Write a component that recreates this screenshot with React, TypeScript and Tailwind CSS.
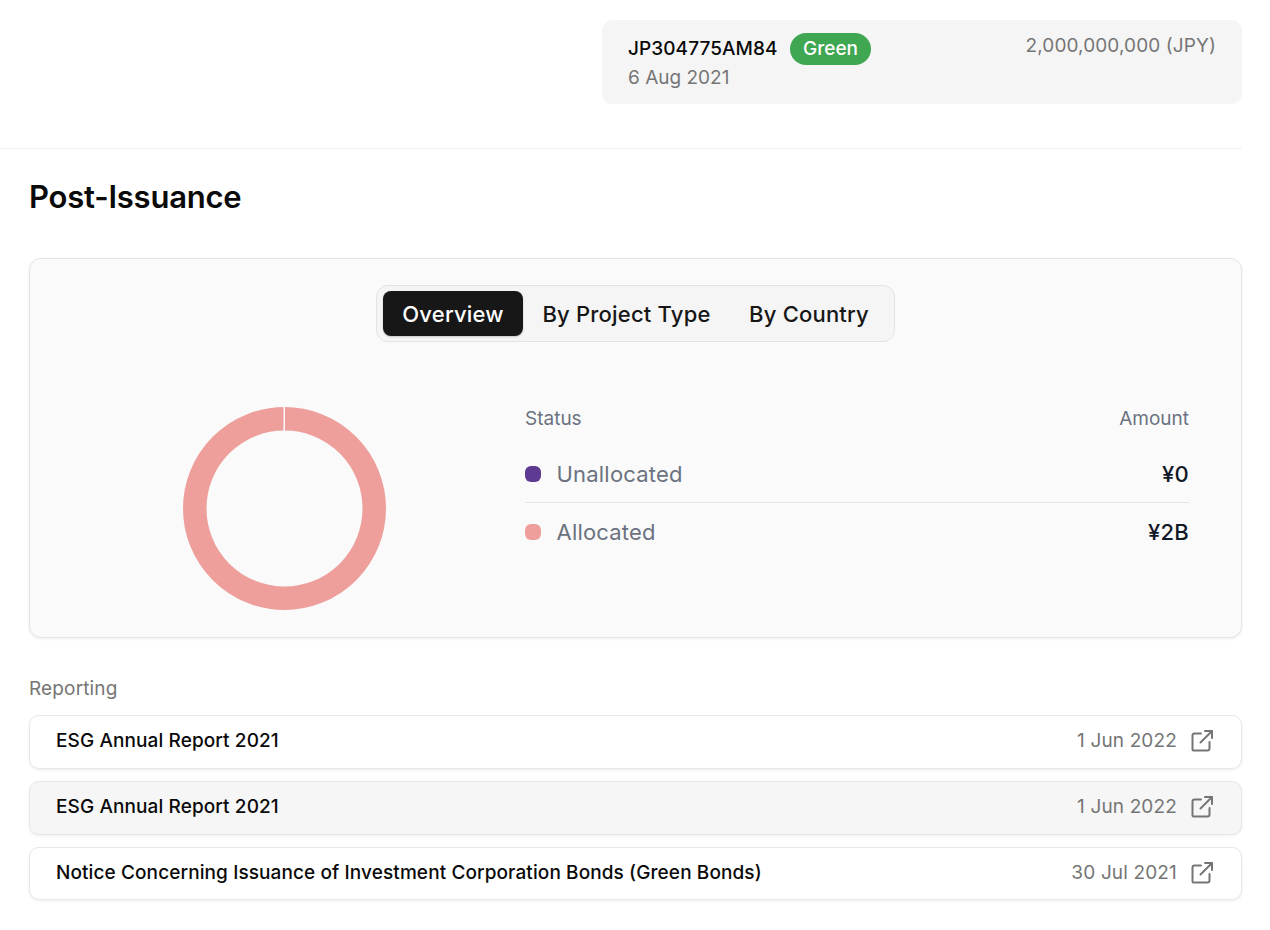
import React from "react";

const font = { fontFamily: "Inter, sans-serif" };

function ExtIcon() {
  return (
    <svg className="-mt-[1px]" width="24" height="24" viewBox="0 0 24 24" fill="none" stroke="#757575" strokeWidth="2" strokeLinecap="round" strokeLinejoin="round">
      <path d="M11 4.5H4.5a2 2 0 0 0-2 2v14a1 1 0 0 0 1 1h14a2 2 0 0 0 2-2V13" />
      <path d="M15 2h7v7" />
      <path d="M22 2 10.5 13.5" />
    </svg>
  );
}

function ReportRow({ title, date, hover }: { title: string; date: string; hover?: boolean }) {
  return (
    <div className={`flex h-[53.75px] items-center justify-between rounded-[10px] border border-[#e8e8e8] pl-[26px] pr-[27px] shadow-[0_1px_3px_rgba(0,0,0,0.08)] ${hover ? "bg-[#f6f6f6]" : "bg-white"}`}>
      <span className="mb-[1px] text-[19px] font-medium tracking-[0.1px] text-[#0a0a0a]">{title}</span>
      <div className="flex items-center gap-[13px]">
        <span className="mb-[1px] text-[19px] tracking-[0.15px] text-[#757575]">{date}</span>
        <ExtIcon />
      </div>
    </div>
  );
}

export default function App() {
  return (
    <div className="min-h-[930px] w-full bg-white pr-[28px] pt-[20px]" style={font}>
      <div className="flex justify-end">
        <div className="flex h-[84px] w-[640px] justify-between rounded-[10px] bg-[#f5f5f5] pl-[26px] pr-[26px] pt-[13px]">
          <div>
            <div className="flex items-center gap-[12.5px]">
              <span className="text-[19px] font-medium tracking-[0.08px] text-[#0a0a0a]">JP304775AM84</span>
              <span className="flex h-[32px] items-center rounded-full bg-[#3fa651] px-[13px] text-[19px] font-medium text-white">Green</span>
            </div>
            <div className="text-[19px] leading-[26px] text-[#757575]">6 Aug 2021</div>
          </div>
          <div className="text-[19px] leading-[26px] tracking-[0.1px] text-[#757575]">2,000,000,000 (JPY)</div>
        </div>
      </div>

      <div className="mt-[44px] border-t border-[#f2f2f2]" />

      <div className="pl-[29px]">
        <h2 className="mt-[26px] text-[31px] font-semibold leading-[44px] tracking-[-0.22px] text-[#0a0a0a]">Post-Issuance</h2>

        <div className="mt-[39px] h-[380px] rounded-[12px] border border-[#e5e5e5] bg-[#fafafa] shadow-[0_1px_3px_rgba(0,0,0,0.08)]">
          <div className="flex justify-center pt-[26px]">
            <div className="flex h-[57px] items-center rounded-[12px] border border-[#e3e3e3] bg-[#f5f5f5] px-[6px] text-[22px] font-medium leading-none tracking-[0.2px]">
              <span className="flex h-[45px] w-[140px] items-center justify-center rounded-[8px] bg-[#171717] text-white shadow-[0_1px_2px_rgba(0,0,0,0.2)]">Overview</span>
              <span className="flex h-[45px] w-[207px] items-center justify-center text-[#171717]">By Project Type</span>
              <span className="flex h-[45px] w-[158px] items-center justify-center text-[#171717]">By Country</span>
            </div>
          </div>

          <div className="flex pt-[64px]">
            <div className="ml-[152px] h-[204px] w-[204px] shrink-0">
              <svg width="204" height="204" viewBox="0 0 204 204">
                <circle cx="102.5" cy="102.5" r="89.75" fill="none" stroke="#ee9e9b" strokeWidth="23.5" />
                <rect x="101.5" y="0" width="1.5" height="25" fill="#fafafa" />
              </svg>
            </div>

            <div className="ml-[139px] mr-[52px] flex-1">
              <div className="flex justify-between text-[19px] leading-[26px] text-[#6b7280]">
                <span>Status</span>
                <span>Amount</span>
              </div>
              <div className="mt-[14px] flex h-[57px] items-center justify-between border-b border-[#e5e5e5]">
                <div className="flex items-center gap-[15.5px]">
                  <span className="h-[16px] w-[16px] rounded-[6px] bg-[#5f3a93]" />
                  <span className="text-[22px] tracking-[0.2px] text-[#6b7280]">Unallocated</span>
                </div>
                <span className="text-[22px] font-medium tracking-[0.25px] text-[#111827]">¥0</span>
              </div>
              <div className="flex h-[58px] items-center justify-between">
                <div className="flex items-center gap-[15.5px]">
                  <span className="h-[16px] w-[16px] rounded-[6px] bg-[#ee9e9b]" />
                  <span className="text-[22px] tracking-[0.2px] text-[#6b7280]">Allocated</span>
                </div>
                <span className="text-[22px] font-medium tracking-[0.25px] text-[#111827]">¥2B</span>
              </div>
            </div>
          </div>
        </div>

        <div className="mt-[38px] text-[19px] font-normal tracking-[0.15px] leading-[26px] text-[#757575]">Reporting</div>
        <div className="mt-[13px] flex flex-col gap-[12px]">
          <ReportRow title="ESG Annual Report 2021" date="1 Jun 2022" />
          <ReportRow title="ESG Annual Report 2021" date="1 Jun 2022" hover />
          <ReportRow title="Notice Concerning Issuance of Investment Corporation Bonds (Green Bonds)" date="30 Jul 2021" />
        </div>
      </div>
    </div>
  );
}
